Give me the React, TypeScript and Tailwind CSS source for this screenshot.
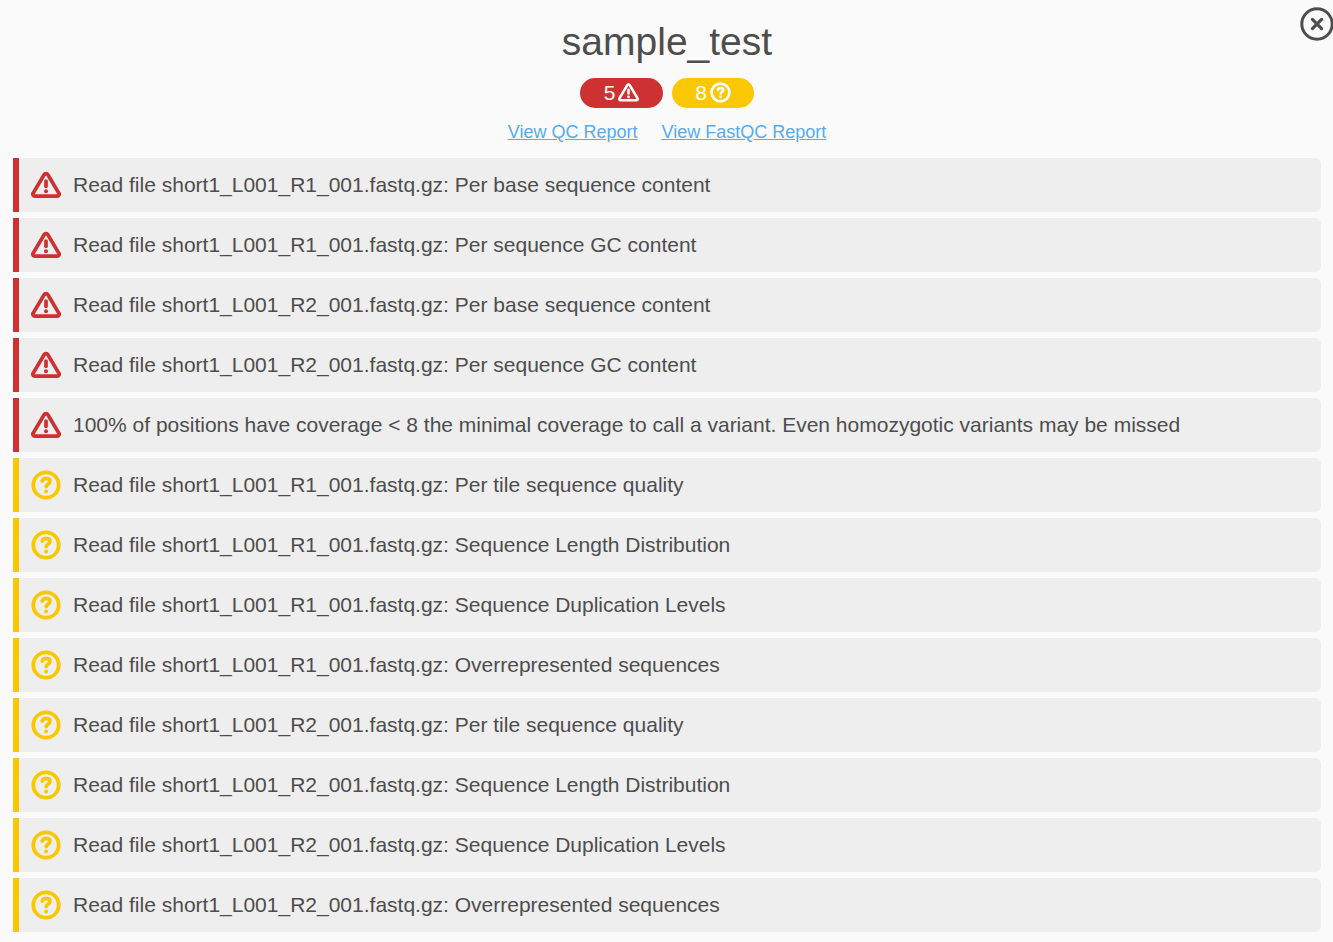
import React from "react";

type Severity = "error" | "warning";

type Message = { severity: Severity; text: string };

const messages: Message[] = [
  { severity: "error", text: "Read file short1_L001_R1_001.fastq.gz: Per base sequence content" },
  { severity: "error", text: "Read file short1_L001_R1_001.fastq.gz: Per sequence GC content" },
  { severity: "error", text: "Read file short1_L001_R2_001.fastq.gz: Per base sequence content" },
  { severity: "error", text: "Read file short1_L001_R2_001.fastq.gz: Per sequence GC content" },
  {
    severity: "error",
    text: "100% of positions have coverage < 8 the minimal coverage to call a variant. Even homozygotic variants may be missed",
  },
  { severity: "warning", text: "Read file short1_L001_R1_001.fastq.gz: Per tile sequence quality" },
  { severity: "warning", text: "Read file short1_L001_R1_001.fastq.gz: Sequence Length Distribution" },
  { severity: "warning", text: "Read file short1_L001_R1_001.fastq.gz: Sequence Duplication Levels" },
  { severity: "warning", text: "Read file short1_L001_R1_001.fastq.gz: Overrepresented sequences" },
  { severity: "warning", text: "Read file short1_L001_R2_001.fastq.gz: Per tile sequence quality" },
  { severity: "warning", text: "Read file short1_L001_R2_001.fastq.gz: Sequence Length Distribution" },
  { severity: "warning", text: "Read file short1_L001_R2_001.fastq.gz: Sequence Duplication Levels" },
  { severity: "warning", text: "Read file short1_L001_R2_001.fastq.gz: Overrepresented sequences" },
];

const ErrorIcon = ({ className }: { className: string }) => (
  <svg
    className={className}
    viewBox="0 0 30 30"
    fill="none"
    stroke="currentColor"
    strokeWidth="3.7"
    strokeLinecap="round"
    strokeLinejoin="round"
    aria-hidden
  >
    <path d="M13.1 4.7 2.2 23.1A1.9 1.9 0 0 0 3.8 26.1H26.2A1.9 1.9 0 0 0 27.8 23.1L16.9 4.7A2.2 2.2 0 0 0 13.1 4.7Z" />
    <path d="M15 11V16.3" />
    <circle cx="15" cy="21.3" r="2" fill="currentColor" stroke="none" />
  </svg>
);

const WarningIcon = ({ className }: { className: string }) => (
  <svg
    className={className}
    viewBox="0 0 30 30"
    fill="none"
    stroke="currentColor"
    strokeWidth="3.8"
    strokeLinecap="round"
    strokeLinejoin="round"
    aria-hidden
  >
    <circle cx="15" cy="15" r="12.7" />
    <path d="M11.3 11.2C11.7 9.5 12.7 8.7 14.2 8.7H15.9C17.8 8.7 19 9.8 19 11.6C19 14.2 15.2 14.4 15.2 16.6" strokeWidth="3.7" />
    <circle cx="15.1" cy="21.4" r="2" fill="currentColor" stroke="none" />
  </svg>
);

const CloseIcon = () => (
  <svg
    className="size-[34px]"
    viewBox="0 0 34 34"
    fill="none"
    stroke="currentColor"
    strokeLinecap="round"
    aria-hidden
  >
    <circle cx="17" cy="17" r="15.2" strokeWidth="3" />
    <path d="m12.4 12.4 9.2 9.2m0-9.2-9.2 9.2" strokeWidth="3.2" />
  </svg>
);

const MessageRow: React.FC<{ message: Message }> = ({ message }) => {
  const isError = message.severity === "error";
  return (
    <li
      className={`flex h-[54px] items-center gap-3 rounded-r-md border-l-[6px] bg-[#eeeeee] pl-3 ${
        isError ? "border-[#cd3131]" : "border-[#f9c802]"
      }`}
    >
      {isError ? (
        <ErrorIcon className="size-[30px] shrink-0 text-[#cd3131]" />
      ) : (
        <WarningIcon className="size-[30px] shrink-0 text-[#f9c802]" />
      )}
      <span className="text-[21px]">{message.text}</span>
    </li>
  );
};

const App: React.FC = () => {
  const errorCount = messages.filter((m) => m.severity === "error").length;
  const warningCount = messages.length - errorCount;

  return (
    <main className="relative h-[942px] w-full overflow-hidden bg-[#fafafa] pr-3 pl-[13px] font-['Liberation_Sans',Arial,sans-serif] text-[#4d4d4d]">
      <button type="button" aria-label="Close" className="absolute top-[7px] -right-px">
        <CloseIcon />
      </button>

      <header className="flex flex-col items-center">
        <h1 className="mt-5 text-[39px] leading-[44px]">sample_test</h1>
        <div className="mt-3.5 flex gap-[9px] text-[21px] leading-none text-white">
          <span className="flex h-[30px] w-[83px] items-center justify-center gap-[3px] rounded-full bg-[#cd3131] pb-0.5">
            {errorCount}
            <ErrorIcon className="size-[21px]" />
          </span>
          <span className="flex h-[30px] w-[82px] items-center justify-center gap-[3px] rounded-full bg-[#f9c802] pb-0.5">
            {warningCount}
            <WarningIcon className="size-[21px]" />
          </span>
        </div>
        <nav className="mt-3 flex h-6 items-center gap-6 text-lg leading-6 text-[#55acee] underline">
          <a href="#qc">View QC Report</a>
          <a href="#fastqc">View FastQC Report</a>
        </nav>
      </header>

      <ul className="mt-3.5 flex flex-col gap-1.5">
        {messages.map((message) => (
          <MessageRow key={message.text} message={message} />
        ))}
      </ul>
    </main>
  );
};

export default App;
